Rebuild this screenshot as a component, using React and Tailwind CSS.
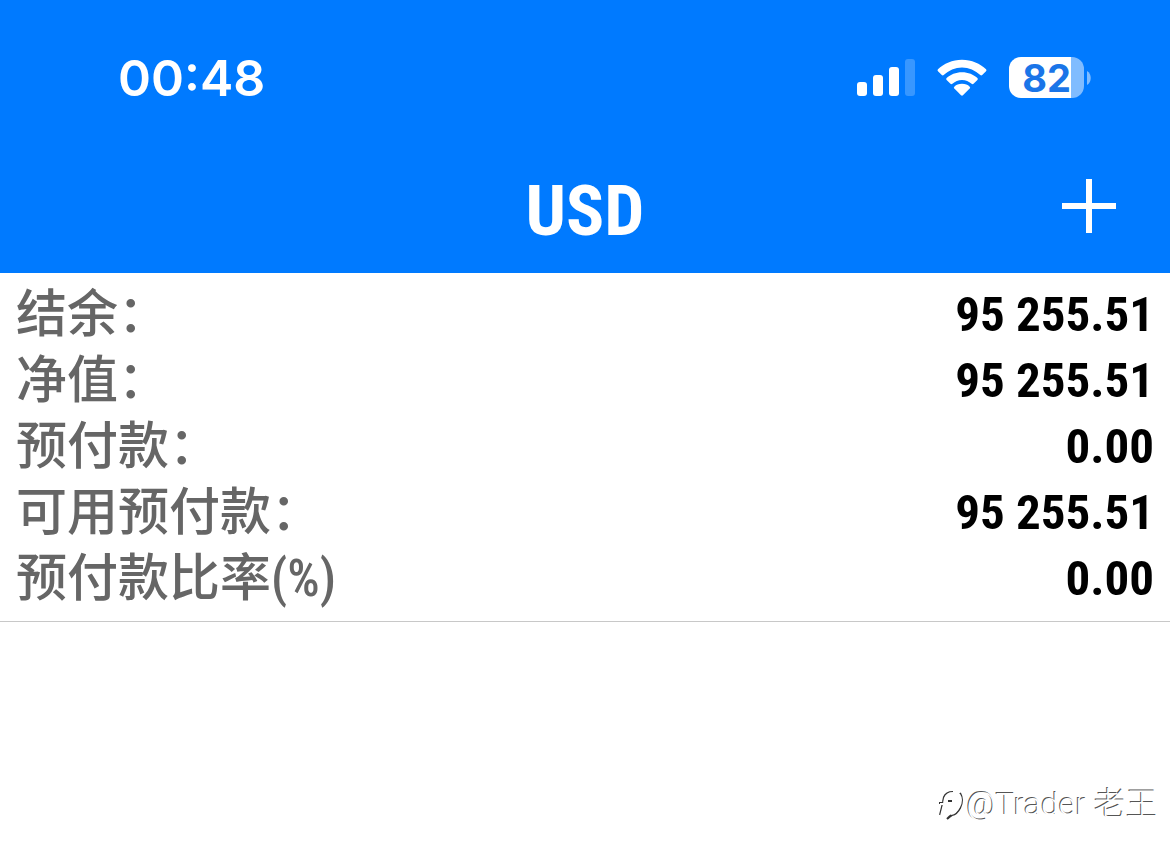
import React from 'react'

const rows = [
  { id: 'balance', label: '结余：', value: '95 255.51' },
  { id: 'equity', label: '净值：', value: '95 255.51' },
  { id: 'margin', label: '预付款：', value: '0.00' },
  { id: 'free-margin', label: '可用预付款：', value: '95 255.51' },
  { id: 'margin-level', label: '预付款比率(%)', value: '0.00' },
]

const SignalIcon = () => (
  <svg width="58" height="38" viewBox="0 0 58 38" fill="#fff" aria-hidden="true">
    <rect x="0" y="23" width="10" height="14" rx="3" />
    <rect x="16" y="16" width="10" height="21" rx="3" />
    <rect x="32" y="8" width="10" height="29" rx="3" />
    <rect x="48" y="0" width="10" height="37" rx="3" opacity="0.22" />
  </svg>
)

const WifiIcon = () => (
  <svg width="50" height="38" viewBox="0 0 52 38" fill="#fff" aria-hidden="true">
    <path d="M26 0C36 0 45 4 51 10Q52 11 51 12L47 16Q46 17 45 16C40 11 33 8 26 8S12 11 7 16Q6 17 5 16L1 12Q0 11 1 10C7 4 16 0 26 0Z" />
    <path d="M26 13C32.500 13 38 15.500 42 19Q43 20 42 21L38 25Q37 26 36 25C33 22.500 30 21 26 21S19 22.500 16 25Q15 26 14 25L10 21Q9 20 10 19C14 15.500 19.500 13 26 13Z" />
    <path d="M26 25C29.500 25 32 26 34 28Q35 29 34 30L27 37Q26 38 25 37L18 30Q17 29 18 28C20 26 22.500 25 26 25Z" />
  </svg>
)

const Battery = () => (
  <div className="flex items-center gap-[3px]">
    <div className="flex h-[41px] w-[75px] items-center justify-center rounded-xl bg-[linear-gradient(to_right,#fff_83%,#80bcff_83%)] font-[Inter,sans-serif] text-[38px] leading-none font-bold text-[#1a75e8]">
      82
    </div>
    <svg width="4" height="14" viewBox="0 0 4 14" fill="#80bcff" aria-hidden="true">
      <path d="M0 0C5 3 5 11 0 14Z" />
    </svg>
  </div>
)

const StatusBar = () => (
  <div className="flex h-[155px] items-center justify-between pr-[79px] pl-[118px]">
    <time className="font-[Inter,sans-serif] text-[50px] leading-none font-semibold">00:48</time>
    <div className="flex items-center gap-[22px]">
      <SignalIcon />
      <WifiIcon />
      <Battery />
    </div>
  </div>
)

const Watermark = () => (
  <div className="flex items-center justify-end px-3 pb-7 text-white">
    <svg width="32" height="36" viewBox="0 0 32 36" fill="none" strokeWidth="2" aria-hidden="true">
      <g stroke="#333">
        <path d="M5 29L8 17H4M8 16L9 11Q11 6 18 6" />
        <path d="M13 15H17M25 7Q29 14 25 22Q22 28 17 29Q15 30 12 33" />
      </g>
      <g stroke="#fff">
        <path d="M6 30L9 18H5M9 17L10 12Q12 7 18 7" />
        <path d="M24 8Q28 14 24 21Q21 27 16 28" />
      </g>
    </svg>
    <span className="font-[Roboto,'Noto_Sans_CJK_SC',sans-serif] text-[32px] leading-11 font-light [text-shadow:-1px_-1px_0_#555]">
      @Trader 老王
    </span>
  </div>
)

const App = () => {
  return (
    <div className="flex min-h-screen flex-col bg-white">
      <header className="bg-[#007aff] text-white">
        <StatusBar />
        <div className="grid h-[118px] grid-cols-[1fr_auto_1fr] items-center px-[54px] pb-4">
          <h1 className="col-start-2 pt-2 font-['Roboto_Condensed','Liberation_Sans',sans-serif] text-[71px] leading-none font-bold">
            USD
          </h1>
          <button type="button" aria-label="Add" className="justify-self-end">
            <svg width="54" height="54" viewBox="0 0 54 54" stroke="#fff" strokeWidth="6" aria-hidden="true">
              <path d="M27 0V54M0 27H54" />
            </svg>
          </button>
        </div>
      </header>

      <dl className="border-b border-[#c8c8c8] px-4 py-[9px] font-['Roboto_Condensed','Liberation_Sans','Noto_Sans_CJK_SC',sans-serif] leading-[66px]">
        {rows.map((row) => (
          <div key={row.id} className="flex justify-between">
            <dt className="text-[51px] font-medium text-[#666]">{row.label}</dt>
            <dd className="text-[49px] font-bold text-black">{row.value}</dd>
          </div>
        ))}
      </dl>

      <div className="mt-auto">
        <Watermark />
      </div>
    </div>
  )
}

export default App
